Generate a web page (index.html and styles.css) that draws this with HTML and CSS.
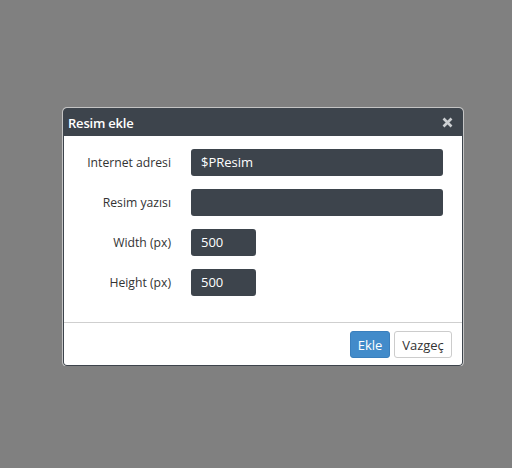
FILE: index.html
```html
<!DOCTYPE html>
<html>
<head>
<meta charset="utf-8">
<link rel="stylesheet" href="styles.css">
</head>
<body>
<div class="dialog">
  <div class="header">
    <span class="title">Resim ekle</span>
    <svg class="close" width="11" height="11" viewBox="0 0 11 11"><path d="M1.5 1.5 L9.5 9.5 M9.5 1.5 L1.5 9.5" stroke="#cdd0d3" stroke-width="2.6" stroke-linecap="butt"/></svg>
  </div>
  <div class="content">
    <div class="form">
      <label class="label">Internet adresi</label>
      <div class="field wide">$PResim</div>
      <label class="label">Resim yazısı</label>
      <div class="field wide"></div>
      <label class="label">Width (px)</label>
      <div class="field short">500</div>
      <label class="label">Height (px)</label>
      <div class="field short">500</div>
    </div>
    <div class="footer">
      <button class="btn primary">Ekle</button>
      <button class="btn secondary">Vazgeç</button>
    </div>
  </div>
</div>
</body>
</html>
```
FILE: styles.css
```css
html, body {
  margin: 0;
  padding: 0;
  background: #808080;
  font-family: "Open Sans", "DejaVu Sans", sans-serif;
}
.dialog {
  margin: 108px 0 0 63px;
  width: 398px;
  border: 1px solid #3d444c;
  border-radius: 4px;
  box-shadow: 0 0 0 1px #c4c4c4;
  background: #3d444c;
  overflow: hidden;
}
.header {
  height: 27px;
  display: flex;
  align-items: center;
  justify-content: space-between;
  padding: 0 9px 0 4px;
  color: #fff;
}
.title {
  font-size: 13px;
  font-weight: 600;
  letter-spacing: -0.2px;
}
.close {
  display: block;
}
.content {
  background: #fff;
}
.form {
  display: grid;
  grid-template-columns: 107px 1fr;
  column-gap: 20px;
  row-gap: 13px;
  padding: 13px 19px 26px 0;
  align-items: center;
  border-bottom: 1px solid #cfcfcf;
}
.label {
  text-align: right;
  font-size: 12.2px;
  color: #333;
}
.field {
  height: 27px;
  box-sizing: border-box;
  background: #3d444c;
  border-radius: 3px;
  color: #fff;
  font-size: 13px;
  font-weight: 500;
  line-height: 27px;
  padding-left: 10px;
}
.short {
  width: 65px;
}
.footer {
  display: flex;
  justify-content: flex-end;
  gap: 4px;
  padding: 8px 10px 7px 0;
}
.btn {
  height: 27px;
  border-radius: 3px;
  font-family: "Open Sans", "DejaVu Sans", sans-serif;
  font-size: 13px;
  padding: 0 4px;
  cursor: pointer;
}
.primary {
  background: #428bca;
  border: 1px solid #3a7fbd;
  color: #fff;
  width: 40px;
}
.secondary {
  background: #fff;
  border: 1px solid #cccccc;
  color: #333;
  width: 58px;
}
```
